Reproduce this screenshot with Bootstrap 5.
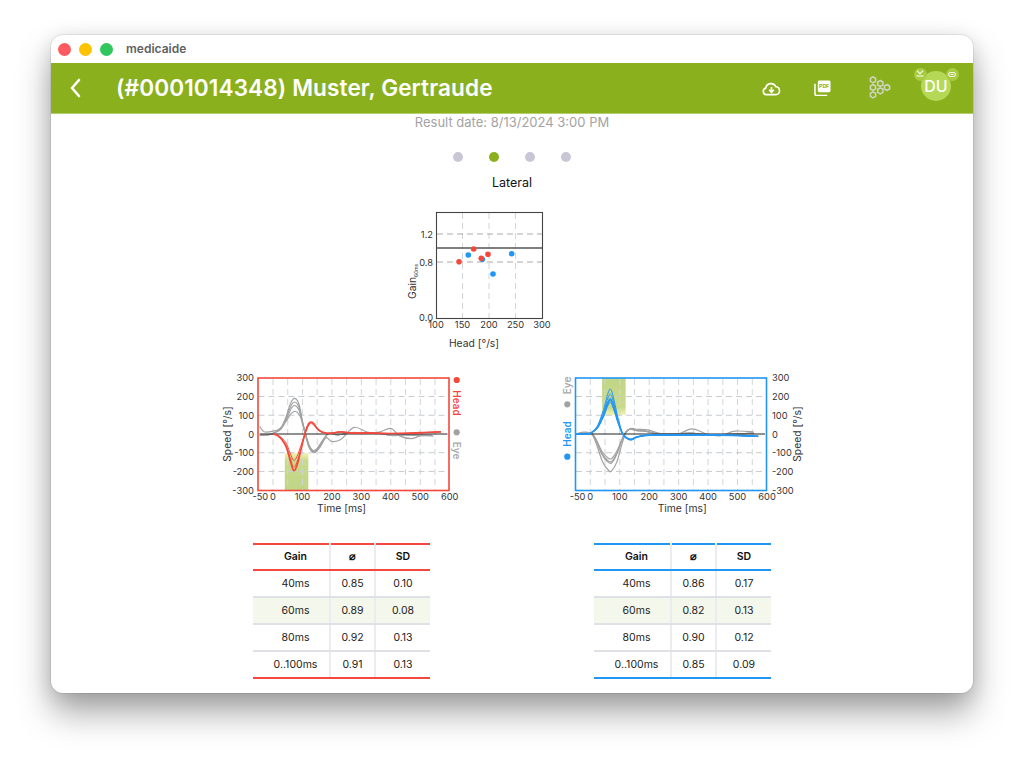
<!DOCTYPE html>
<html lang="en">
<head>
  <meta charset="UTF-8" />
  <meta name="viewport" content="width=device-width, initial-scale=1" />
  <title>medicaide</title>
  <link href="https://cdn.jsdelivr.net/npm/bootstrap@5.3.0/dist/css/bootstrap.min.css" rel="stylesheet" />
  <style>
    html, body { height: 100%; margin: 0; background: #fff; overflow: hidden; }
    body { font-family: Inter, "Liberation Sans", sans-serif; padding: 35px 0 0 51px; }
    .app-window {
      width: 922px; height: 658px; background: #fff; border-radius: 12px;
      box-shadow: 0 0 0 1px rgba(0,0,0,.07), 0 20px 34px rgba(0,0,0,.34), 0 4px 20px rgba(0,0,0,.12);
      overflow: hidden;
    }
    .title-bar { height: 28px; padding-left: 7px; gap: 8px; }
    .light { width: 13px; height: 13px; border-radius: 50%; }
    .light-red { background: #ff5a5f; }
    .light-yellow { background: #fdc200; }
    .light-green { background: #30c85e; }
    .app-name { font-size: 12px; font-weight: 600; color: #5f5f5f; margin-left: 5px; }
    .green-bar { height: 51px; background: #8bb01e; border-bottom: 1px solid #b4cf6c; color: #fff; }
    .back-btn { width: 65px; padding-left: 18px; }
    .patient-name { font-size: 22.6px; font-weight: 600; margin: 0; letter-spacing: .1px; }
    .bar-icons { position: relative; width: 213px; height: 50px; flex: none; }
    .bar-icon { position: absolute; }
    .bar-icons .ic-cloud { left: 2px; top: 18px; }
    .bar-icons .ic-pdf { left: 54px; top: 17px; }
    .bar-icons .ic-hex { left: 108px; top: 13px; }
    .bar-icons .ic-down { left: 156px; top: 7px; }
    .bar-icons .ic-link { left: 188px; top: 8.5px; }
    .avatar {
      position: absolute; left: 161px; top: 8px; width: 30px; height: 30px; border-radius: 50%;
      background: #b5d957; font-size: 16px; font-weight: 500; line-height: 30px; text-align: center;
    }
    .mini-badge { position: absolute; top: 4.5px; width: 13px; height: 13px; border-radius: 50%; background: #a8cb42; }
    .mb-left { left: 153.5px; }
    .mb-right { left: 185.5px; }
    .result-date { font-size: 13px; color: #a3a3a3; line-height: 17px; text-align: center; }
    .pager { gap: 26px; margin-top: 21px; height: 10px; }
    .pager-dot { width: 10px; height: 10px; border-radius: 50%; background: #c9c6d6; }
    .pager-dot.on { background: #8bb01e; }
    .view-title { font-size: 12.5px; line-height: 16px; color: #111; text-align: center; margin-top: 13px; }
    .scatter-wrap { margin-top: 14px; height: 165px; }
    .pane { width: 341px; }
    .chart-svg { display: block; }
    .gain-table { width: 177px; margin: 23px auto 0; font-size: 10.5px; table-layout: fixed; color: #222; }
    .gain-table > :not(caption) > * > * {
      padding: 0; height: 27px; vertical-align: middle; text-align: center;
      border-bottom: 2px solid #e0e0e7; border-right: 2px solid #ececf0; box-shadow: none; background: transparent;
    }
    .gain-table > thead > tr > th { height: 26px; font-weight: 600; color: #111; }
    .gain-table tr > *:first-child { padding-left: 9px; }
    .gain-table tr > *:last-child { border-right: 0; }
    .gain-table .hi > * { background: #f4f7ec; }
    .gain-red { border-top: 2px solid #f4483d; }
    .gain-red tr:last-child > * { border-bottom: 2px solid #f4483d; }
    .gain-blue { border-top: 2px solid #2196f3; }
    .gain-blue tr:last-child > * { border-bottom: 2px solid #2196f3; }
    svg text { font-family: Inter, "Liberation Sans", sans-serif; }
  </style>
</head>
<body>

<div class="app-window">
  <div class="title-bar d-flex align-items-center">
    <span class="light light-red"></span>
    <span class="light light-yellow"></span>
    <span class="light light-green"></span>
    <span class="app-name">medicaide</span>
  </div>

  <div class="green-bar d-flex align-items-center">
    <div class="back-btn">
      <svg width="12" height="20" viewBox="0 0 12 20" class="d-block"><path d="M10 2 3 10l7 8" fill="none" stroke="#fff" stroke-width="2.6" stroke-linecap="round" stroke-linejoin="round"/></svg>
    </div>
    <h1 class="patient-name flex-grow-1">(#0001014348) Muster, Gertraude</h1>
    <div class="bar-icons">
      <svg class="bar-icon ic-cloud" width="19" height="15" viewBox="0 0 20 16">
        <path d="M5 14.5H4.5a3.5 3.5 0 0 1-.6-6.9A5.6 5.6 0 0 1 14.6 6.2a4.2 4.2 0 0 1 .6 8.3z" fill="none" stroke="#fff" stroke-width="1.7"/>
        <path d="M10 6.5v4M7.4 9.3 10 12l2.6-2.7" fill="none" stroke="#fff" stroke-width="1.8"/>
      </svg>
      <svg class="bar-icon ic-pdf" width="17" height="16" viewBox="0 0 18 17">
        <path d="M1 4v11A1.5 1.5 0 0 0 2.500 16.500H14" fill="none" stroke="#fff" stroke-width="1.600"/>
        <rect x="4" y="0.500" width="13.500" height="12.500" rx="1.500" fill="#fff"/>
        <text x="10.700" y="9" font-size="5.400" font-weight="700" fill="#8bb01e" text-anchor="middle">PDF</text>
      </svg>
      <svg class="bar-icon ic-hex" width="24" height="26" viewBox="0 0 24 26" fill="none" stroke="#d0d5c4" stroke-width="1.500">
        <defs><polygon id="hexCell" points="0,-3 2.600,-1.500 2.600,1.500 0,3 -2.600,1.500 -2.600,-1.500"/></defs>
        <use href="#hexCell" x="5" y="3.800"/><use href="#hexCell" x="5" y="11.500"/><use href="#hexCell" x="5" y="18.800"/>
        <use href="#hexCell" x="12.300" y="7.500"/><use href="#hexCell" x="12.300" y="14.800"/><use href="#hexCell" x="19" y="11.500"/>
      </svg>
      <div class="avatar">DU</div>
      <span class="mini-badge mb-left"></span>
      <span class="mini-badge mb-right"></span>
      <svg class="bar-icon ic-down" width="8" height="7" viewBox="0 0 8 7" fill="none" stroke="#fff" stroke-width="1.100"><path d="M.5 6h7M1 .7 4 3.800 7 .7"/></svg>
      <svg class="bar-icon ic-link" width="8" height="5" viewBox="0 0 8 5" fill="none" stroke="#fff" stroke-width="1"><rect x=".5" y=".5" width="7" height="4" rx="2"/><path d="M2.500 2.500h3"/></svg>
    </div>
  </div>

  <div class="result-date">Result date: 8/13/2024 3:00 PM</div>

  <div class="pager d-flex justify-content-center">
    <span class="pager-dot"></span>
    <span class="pager-dot on"></span>
    <span class="pager-dot"></span>
    <span class="pager-dot"></span>
  </div>

  <div class="view-title">Lateral</div>

  <div class="scatter-wrap d-flex justify-content-center">
    <svg id="scatter" class="chart-svg" width="224" height="150" viewBox="400 205 224 150"></svg>
  </div>

  <div class="d-flex justify-content-center">
    <div class="pane">
      <svg id="chartLeft" class="chart-svg" width="341" height="150" viewBox="171 370 341 150"></svg>
      <table class="table gain-table gain-red mb-0">
        <colgroup><col style="width:77px"><col style="width:45px"><col></colgroup>
        <thead><tr><th>Gain</th><th>⌀</th><th>SD</th></tr></thead>
        <tbody>
          <tr><td>40ms</td><td>0.85</td><td>0.10</td></tr>
          <tr class="hi"><td>60ms</td><td>0.89</td><td>0.08</td></tr>
          <tr><td>80ms</td><td>0.92</td><td>0.13</td></tr>
          <tr><td>0..100ms</td><td>0.91</td><td>0.13</td></tr>
        </tbody>
      </table>
    </div>
    <div class="pane">
      <svg id="chartRight" class="chart-svg" width="341" height="150" viewBox="512 370 341 150"></svg>
      <table class="table gain-table gain-blue mb-0">
        <colgroup><col style="width:77px"><col style="width:45px"><col></colgroup>
        <thead><tr><th>Gain</th><th>⌀</th><th>SD</th></tr></thead>
        <tbody>
          <tr><td>40ms</td><td>0.86</td><td>0.17</td></tr>
          <tr class="hi"><td>60ms</td><td>0.82</td><td>0.13</td></tr>
          <tr><td>80ms</td><td>0.90</td><td>0.12</td></tr>
          <tr><td>0..100ms</td><td>0.85</td><td>0.09</td></tr>
        </tbody>
      </table>
    </div>
  </div>
</div>

<script src="https://cdn.jsdelivr.net/npm/bootstrap@5.3.0/dist/js/bootstrap.bundle.min.js"></script>
<script>
  const RED = '#f4483d', BLUE = '#2196f3', GREY = '#a2a2a2', GRID = '#d0d6da', INK = '#333';

  function txt(x, y, s, o = {}) {
    const rot = o.rot ? ` transform="rotate(${o.rot} ${x} ${y})"` : '';
    return `<text x="${x}" y="${y}" font-size="${o.size || 9.3}" text-anchor="${o.anchor || 'middle'}" fill="${o.fill || INK}" font-weight="${o.weight || 400}"${rot}>${s}</text>`;
  }
  function line(x1, y1, x2, y2, col, w, dash) {
    return `<line x1="${x1}" y1="${y1}" x2="${x2}" y2="${y2}" stroke="${col}" stroke-width="${w}"${dash ? ` stroke-dasharray="${dash}"` : ''}/>`;
  }
  // catmull-rom through points
  function smooth(p) {
    let d = `M${p[0][0].toFixed(1)} ${p[0][1].toFixed(1)}`;
    for (let i = 0; i < p.length - 1; i++) {
      const a = p[i - 1] || p[i], b = p[i], c = p[i + 1], e = p[i + 2] || c;
      d += `C${(b[0] + (c[0] - a[0]) / 6).toFixed(1)} ${(b[1] + (c[1] - a[1]) / 6).toFixed(1)} ${(c[0] - (e[0] - b[0]) / 6).toFixed(1)} ${(c[1] - (e[1] - b[1]) / 6).toFixed(1)} ${c[0].toFixed(1)} ${c[1].toFixed(1)}`;
    }
    return d;
  }

  // scatter
  (function () {
    const X = v => 436 + (v - 100) * 0.53, Y = v => 318 - v * 70;
    let s = '';
    [150, 200, 250].forEach(v => s += line(X(v), 213, X(v), 318, GRID, 1, '6 4'));
    [1.2, 0.8].forEach(v => s += line(437, Y(v), 542, Y(v), '#aaa', 1, '6 4'));
    s += line(436, 248, 542, 248, '#555', 1.3);
    s += `<rect x="436.5" y="212.5" width="106" height="106" fill="none" stroke="#444" stroke-width="1.1"/>`;
    [[468.3, 255], [482.3, 259.3], [493, 274], [511.7, 253.7]].forEach(p => s += `<circle cx="${p[0]}" cy="${p[1]}" r="2.8" fill="${BLUE}"/>`);
    [[459, 261.7], [473.7, 249], [481.3, 258.3], [488, 254.3]].forEach(p => s += `<circle cx="${p[0]}" cy="${p[1]}" r="2.8" fill="${RED}"/>`);
    s += txt(433, 237.5, '1.2', { anchor: 'end' }) + txt(433, 265.5, '0.8', { anchor: 'end' }) + txt(433, 321, '0.0', { anchor: 'end' });
    [100, 150, 200, 250, 300].forEach(v => s += txt(X(v), 327.5, v));
    s += `<text transform="translate(416 299) rotate(-90)" font-size="10.3" fill="${INK}">Gain<tspan font-size="5" dy="1.5">60ms</tspan></text>`;
    s += txt(474, 347, 'Head [°/s]', { size: 10.3 });
    document.getElementById('scatter').innerHTML = s;
  })();

  // traces, in [ms, deg/s]
  const headL = [[0, 0], [15, -8], [30, -30], [45, -70], [58, -140], [70, -195], [82, -165], [95, -85], [105, -20], [115, 35], [125, 62], [137, 58], [150, 30], [165, 12], [190, 3], [230, 12], [270, 5], [320, 6], [380, 3], [450, 4], [510, 8], [570, 12]];
  const eyeL = [[-45, -8], [-10, -2], [10, 12], [28, 35], [45, 95], [60, 165], [74, 190], [88, 160], [100, 70], [110, 0], [122, -70], [135, -97], [150, -85], [170, -35], [190, 5], [220, -5], [270, 8], [310, 5], [360, 5], [400, -8], [450, -5], [540, -8]];
  const eyeL2 = [[-45, 40], [-30, 12], [0, 15], [25, 30], [45, 70], [62, 110], [78, 120], [95, 85], [108, 15], [122, -55], [140, -100], [160, -70], [180, -20], [200, -40], [230, -30], [275, 35], [320, 10], [360, 10], [400, 30], [430, -10], [470, -25], [500, -10], [545, -10]];
  const headR = [[-50, 0], [-10, 0], [5, 8], [25, 35], [45, 100], [60, 165], [70, 180], [82, 130], [95, 60], [110, 0], [125, -22], [140, -28], [160, -15], [200, -6], [300, -5], [400, -5], [500, -8], [570, -12]];
  const eyeR = [[-50, 0], [-15, 5], [5, 2], [20, -35], [40, -110], [60, -150], [72, -155], [88, -115], [105, -45], [118, 5], [135, 28], [155, 20], [190, 15], [230, 0], [280, 0], [340, 5], [390, -3], [450, -3], [500, 0], [555, 5]];
  const eyeR2 = [[-50, 0], [-20, 10], [5, 0], [22, -60], [42, -150], [62, -195], [72, -197], [90, -150], [108, -50], [122, 10], [140, 30], [160, 25], [195, 22], [235, 3], [290, -5], [345, 27], [395, 0], [440, -10], [490, 15], [555, 12]];

  function scale(c, f) { return c.map(p => [p[0], p[1] * (p[0] > 120 ? (f + 1) / 2 : f)]); }

  function timeChart(id, o) {
    const X = v => o.x0 + v * 0.2945, Y = v => 434 - v * 0.1873;
    let s = `<defs><linearGradient id="${id}G" x1="0" y1="${o.gradDown ? 0 : 1}" x2="0" y2="${o.gradDown ? 1 : 0}">
      <stop offset="0" stop-color="#f7f4b0"/><stop offset=".2" stop-color="#c9da8c"/><stop offset="1" stop-color="#c1d587"/></linearGradient></defs>`;
    s += `<rect x="${X(40)}" y="${o.bandY}" width="${X(120) - X(40)}" height="${o.bandH}" fill="url(#${id}G)"/>`;
    for (let v = 0; v <= 550; v += 50) s += line(X(v), 379, X(v), 490, GRID, 1, '6 4');
    for (let v = -200; v <= 200; v += 100) if (v) s += line(o.left + 1, Y(v), o.left + 191, Y(v), '#c8ccd0', 1, '6 4');

    const curve = (c, col, w) => `<path d="${smooth(c.map(p => [X(p[0]), Y(p[1])]))}" fill="none" stroke="${col}" stroke-width="${w}"/>`;
    o.eye.forEach(c => s += curve(c, GREY, 1.2));
    s += line(X(-45), 434, o.left + 190, 434, '#222', 1);
    o.head.forEach((c, i) => s += curve(c, o.col, i ? 1 : 1.6));

    s += `<rect x="${o.left + .5}" y="378" width="191" height="112.5" fill="none" stroke="${o.col}" stroke-width="1.6"/>`;

    for (let v = -300; v <= 300; v += 100) s += txt(o.yTx, Y(v) + 3.6, v, { anchor: o.yAnchor });
    for (let v = -50; v <= 600; v += (v < 0 ? 50 : 100)) s += txt(v < 0 ? X(v) + 2 : X(v), 500, v);
    s += txt(X(o.timeAt), 512, 'Time [ms]', { size: 10.3 });
    s += txt(o.spX, 434, 'Speed [°/s]', { size: 10.3, rot: o.spRot });

    s += o.labels;
    document.getElementById(id).innerHTML = s;
  }

  const lab = (x, y, s, col, rot) => `<text transform="translate(${x} ${y}) rotate(${rot})" font-size="10" font-weight="600" fill="${col}" text-anchor="middle">${s}</text>`;

  timeChart('chartLeft', {
    x0: 273, left: 257.5, col: RED, bandY: 453, bandH: 37, gradDown: true,
    head: [headL, scale(headL, .9), scale(headL, .72)],
    eye: [eyeL, scale(eyeL, .9), scale(eyeL, .8), eyeL2],
    yTx: 254, yAnchor: 'end', timeAt: 233, spX: 231, spRot: -90,
    labels: `<circle cx="456.7" cy="380" r="3.1" fill="${RED}"/>` + lab(452.5, 403, 'Head', RED, 90) +
      `<circle cx="456.7" cy="432.3" r="3.1" fill="${GREY}"/>` + lab(452.5, 450.5, 'Eye', '#aaa', 90)
  });

  timeChart('chartRight', {
    x0: 590.3, left: 575, col: BLUE, bandY: 378, bandH: 37, gradDown: false,
    head: [headR, scale(headR, 1.32), scale(headR, 1.17), scale(headR, 1.05), scale(headR, .93)],
    eye: [eyeR, scale(eyeR, .95), scale(eyeR, .85), eyeR2],
    yTx: 772, yAnchor: 'start', timeAt: 312, spX: 801, spRot: -90,
    labels: `<circle cx="567.3" cy="456.7" r="3.1" fill="${BLUE}"/>` + lab(571, 434, 'Head', BLUE, -90) +
      `<circle cx="567.3" cy="404.3" r="3.1" fill="${GREY}"/>` + lab(571, 385.5, 'Eye', '#aaa', -90)
  });
</script>
</body>
</html>
